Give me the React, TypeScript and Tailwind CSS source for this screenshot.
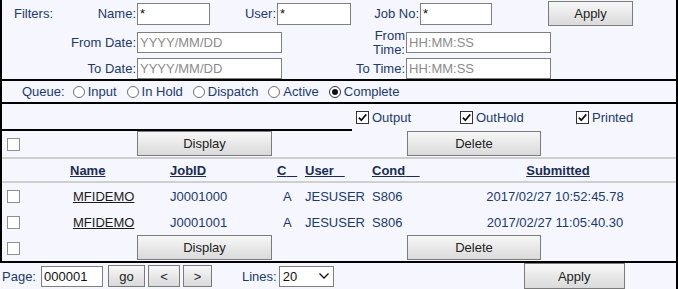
import type { ReactNode } from 'react';

const BTN =
  'flex items-center justify-center border border-[#7b7b7b] bg-linear-to-b from-[#f7f7f7] to-[#dadada] text-[#222] text-[13px]';
const INPUT =
  'border border-[#7f7f7f] bg-white px-[2px] text-[13px] text-[#111] outline-none placeholder:text-[#8c8c8c]';

function Box({ checked }: { checked?: boolean }) {
  return (
    <span
      className={`relative inline-block w-[13px] h-[13px] shrink-0 bg-white border ${
        checked ? 'border-[#333]' : 'border-[#8f8f8f]'
      }`}
    >
      {checked && (
        <svg viewBox="0 0 11 11" className="absolute inset-0 w-[11px] h-[11px]">
          <path d="M1.8 5.6 L4.3 8.2 L9.3 2.4" fill="none" stroke="#111" strokeWidth="1.7" />
        </svg>
      )}
    </span>
  );
}

function Radio({ checked, label }: { checked?: boolean; label: string }) {
  return (
    <span className="flex items-center">
      <span
        className={`flex items-center justify-center w-[12px] h-[12px] rounded-full bg-white border ${
          checked ? 'border-[#333]' : 'border-[#707070]'
        }`}
      >
        {checked && <span className="w-[6px] h-[6px] rounded-full bg-[#111]" />}
      </span>
      <span className="ml-[3px]">{label}</span>
    </span>
  );
}

function Cell({ w, className = '', children }: { w: string; className?: string; children?: ReactNode }) {
  return <div className={`${w} shrink-0 ${className}`}>{children}</div>;
}

const JOBS = [
  { name: 'MFIDEMO', id: 'J0001000', c: 'A', user: 'JESUSER', cond: 'S806', at: '2017/02/27 10:52:45.78' },
  { name: 'MFIDEMO', id: 'J0001001', c: 'A', user: 'JESUSER', cond: 'S806', at: '2017/02/27 11:05:40.30' },
];

function ActionRow() {
  return (
    <div className="flex h-[26px] items-start">
      <Cell w="w-[135px]" className="h-full flex items-center pl-[5px]">
        <Box />
      </Cell>
      <button className={`${BTN} w-[135px] h-[25px]`}>Display</button>
      <button className={`${BTN} ml-[135px] w-[134px] h-[25px]`}>Delete</button>
    </div>
  );
}

export default function App() {
  return (
    <div className="w-[678px] h-[289px] overflow-hidden bg-[#f5f6fe] font-['Liberation_Sans',Arial,sans-serif] text-[13px] leading-[15px] text-[#1b3a6d]">
      <div className="border-r-2 border-black h-full">
        <div className="border-l-2 border-b-2 border-black">
          {/* Filters */}
          <div className="border-b-2 border-black">
            <div className="flex h-[27px] items-center">
              <div className="w-[135px] flex justify-between pl-[12px] pr-px">
                <span>Filters:</span>
                <span>Name:</span>
              </div>
              <input readOnly defaultValue="*" className={`${INPUT} w-[73px] h-[22px]`} />
              <Cell w="w-[67px]" className="text-right pr-px">User:</Cell>
              <input readOnly defaultValue="*" className={`${INPUT} w-[74px] h-[22px]`} />
              <Cell w="w-[69px]" className="text-right pr-px">Job No:</Cell>
              <input readOnly defaultValue="*" className={`${INPUT} w-[72px] h-[22px]`} />
              <button className={`${BTN} ml-[56px] w-[85px] h-[25px]`}>Apply</button>
            </div>
            <div className="flex h-[30px] items-center">
              <Cell w="w-[135px]" className="text-right pr-px">From Date:</Cell>
              <input readOnly placeholder="YYYY/MM/DD" className={`${INPUT} w-[145px] h-[21px]`} />
              <Cell w="w-[124px]" className="text-right pr-px leading-[14px] pt-[1px]">
                <div>From</div>
                <div>Time:</div>
              </Cell>
              <input readOnly placeholder="HH:MM:SS" className={`${INPUT} w-[145px] h-[21px]`} />
            </div>
            <div className="flex h-[22px] items-center">
              <Cell w="w-[135px]" className="text-right pr-px">To Date:</Cell>
              <input readOnly placeholder="YYYY/MM/DD" className={`${INPUT} w-[145px] h-[21px]`} />
              <Cell w="w-[124px]" className="text-right pr-px">To Time:</Cell>
              <input readOnly placeholder="HH:MM:SS" className={`${INPUT} w-[145px] h-[21px]`} />
            </div>
          </div>

          {/* Queue */}
          <div className="flex h-[21px] items-center gap-[10px] pl-[20px] border-b-2 border-black box-content">
            <span className="mr-[-2px]">Queue:</span>
            <Radio label="Input" />
            <Radio label="In Hold" />
            <Radio label="Dispatch" />
            <Radio label="Active" />
            <Radio label="Complete" checked />
          </div>

          {/* Output options */}
          <div className="flex h-[27px]">
            <div className="w-[350px] border-b-2 border-black" />
            <div className="flex items-center pl-[4px]">
              <span className="w-[104px] flex items-center">
                <Box checked />
                <span className="ml-[3px]">Output</span>
              </span>
              <span className="w-[116px] flex items-center">
                <Box checked />
                <span className="ml-[3px]">OutHold</span>
              </span>
              <span className="flex items-center">
                <Box checked />
                <span className="ml-[3px]">Printed</span>
              </span>
            </div>
          </div>

          <div className="border-b-2 border-[#cfcfcf]">
            <ActionRow />
          </div>

          {/* Header */}
          <div className="flex h-[22px] items-center font-bold text-[#1a2d55] border-b-2 border-[#cfcfcf] box-content">
            <Cell w="w-[66px]" />
            <Cell w="w-[102px]" className="pl-[2px]">
              <span className="underline">Name</span>
            </Cell>
            <Cell w="w-[107px]">
              <span className="underline">JobID</span>
            </Cell>
            <Cell w="w-[28px]">
              <span className="underline">C{'\u00a0\u00a0\u00a0'}</span>
            </Cell>
            <Cell w="w-[67px]">
              <span className="underline">User{'\u00a0\u00a0\u00a0'}</span>
            </Cell>
            <Cell w="w-[68px]">
              <span className="underline">Cond{'\u00a0\u00a0\u00a0\u00a0'}</span>
            </Cell>
            <div className="flex-1 text-center">
              <span className="underline">Submitted</span>
            </div>
          </div>

          {/* Jobs */}
          {JOBS.map((j) => (
            <div key={j.id} className="flex h-[26px] items-center">
              <Cell w="w-[66px]" className="pl-[5px] flex">
                <Box />
              </Cell>
              <Cell w="w-[102px]" className="pl-[5px]">
                <span className="underline text-[#1c1c1c]">{j.name}</span>
              </Cell>
              <Cell w="w-[107px]">{j.id}</Cell>
              <Cell w="w-[28px]" className="pl-[6px]">{j.c}</Cell>
              <Cell w="w-[67px]">{j.user}</Cell>
              <Cell w="w-[68px]">{j.cond}</Cell>
              <div className="flex-1 text-center pr-[6px]">{j.at}</div>
            </div>
          ))}

          <ActionRow />
        </div>

        {/* Footer */}
        <div className="flex h-[26px] items-center pl-[2px]">
          <span>Page:</span>
          <input readOnly defaultValue="000001" className={`${INPUT} ml-[5px] w-[62px] h-[21px]`} />
          <button className={`${BTN} ml-[5px] w-[37px] h-[22px]`}>go</button>
          <button className={`${BTN} ml-[3px] w-[32px] h-[22px]`}>&lt;</button>
          <button className={`${BTN} ml-[3px] w-[29px] h-[22px]`}>&gt;</button>
          <span className="ml-[30px]">Lines:</span>
          <div className="ml-[2px] w-[55px] h-[21px] border border-[#7f7f7f] bg-white flex items-center justify-between pl-[3px] pr-[4px] text-[#111]">
            <span>20</span>
            <svg viewBox="0 0 10 6" className="w-[10px] h-[6px]">
              <polyline points="0.5,0.5 5,5 9.5,0.5" fill="none" stroke="#111" strokeWidth="1.3" />
            </svg>
          </div>
          <button className={`${BTN} ml-[190px] w-[101px] h-[26px]`}>Apply</button>
        </div>
      </div>
    </div>
  );
}
